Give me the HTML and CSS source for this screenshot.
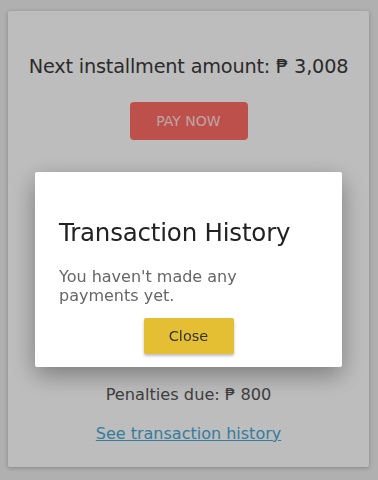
FILE: index.html
```html
<!DOCTYPE html>
<html lang="en">
<head>
  <meta charset="UTF-8" />
  <meta name="viewport" content="width=device-width, initial-scale=1.0"/>
  <title>Loan - Installments</title>
  <link rel="stylesheet" href="styles.css">
</head>
<body>
  <div class="card">
    <p class="next-amount">Next installment amount: ₱ 3,008</p>
    <button class="btn-pay">PAY NOW</button>

    <!-- details hidden under the modal -->
    <div class="summary">
      <p class="summary-row">Penalties due: ₱ 800</p>
    </div>

    <a href="#" class="history-link">See transaction history</a>
  </div>

  <!-- modal -->
  <div class="overlay"></div>
  <div class="modal">
    <h2 class="modal-title">Transaction History</h2>
    <p class="modal-text">You haven't made any payments yet.</p>
    <div class="modal-actions">
      <button class="btn-close">Close</button>
    </div>
  </div>
</body>
</html>
```

FILE: styles.css
```css
body {
  font-family: 'DejaVu Sans', 'Open Sans', sans-serif;
  background-color: #eeeeee;
  color: #3a3a3a;
  margin: 0;
  padding: 11px 9px 12px 8px;
}

.card {
  background: #fff;
  box-shadow: 0 1px 4px rgba(0, 0, 0, 0.25);
  border-radius: 2px;
  padding: 44px 16px 23px;
  display: flex;
  flex-direction: column;
  align-items: center;
}

.next-amount {
  font-size: 19.3px;
  line-height: 23px;
  margin: 0 0 24px;
  letter-spacing: -0.2px;
}

.btn-pay {
  font-family: inherit;
  background-color: #ff6c64;
  color: rgba(255, 255, 255, 0.8);
  border: none;
  border-radius: 4px;
  width: 118px;
  height: 38px;
  font-size: 14px;
  cursor: pointer;
}

.summary {
  margin-top: 245px;
  display: flex;
  flex-direction: column;
  align-items: center;
}

.summary-row {
  margin: 0;
  font-size: 16.2px;
  color: #555;
  line-height: 20px;
}

.history-link {
  margin-top: 19px;
  font-size: 16px;
  line-height: 20px;
  color: #48a8d6;
}

.overlay {
  position: fixed;
  inset: 0;
  background: rgba(0, 0, 0, 0.26);
}

.modal {
  position: fixed;
  top: 172px;
  left: 35px;
  width: 307px;
  height: 195px;
  box-sizing: border-box;
  padding: 46px 24px 0;
  background: #fff;
  border-radius: 2px;
  box-shadow: 0 8px 24px rgba(0, 0, 0, 0.35);
}

.modal-title {
  margin: 0 0 19px;
  font-size: 24.5px;
  font-weight: normal;
  color: #222;
  line-height: 30px;
  letter-spacing: -0.2px;
}

.modal-text {
  margin: 0;
  font-size: 16px;
  color: #666;
  line-height: 19px;
  width: 200px;
}

.modal-actions {
  display: flex;
  justify-content: center;
  margin-top: 13px;
}

.btn-close {
  font-family: inherit;
  background-color: #e4bf33;
  color: #333;
  border: none;
  border-radius: 2px;
  width: 90px;
  height: 36px;
  font-size: 14.5px;
  box-shadow: 0 2px 3px rgba(0, 0, 0, 0.25);
  cursor: pointer;
}
```
